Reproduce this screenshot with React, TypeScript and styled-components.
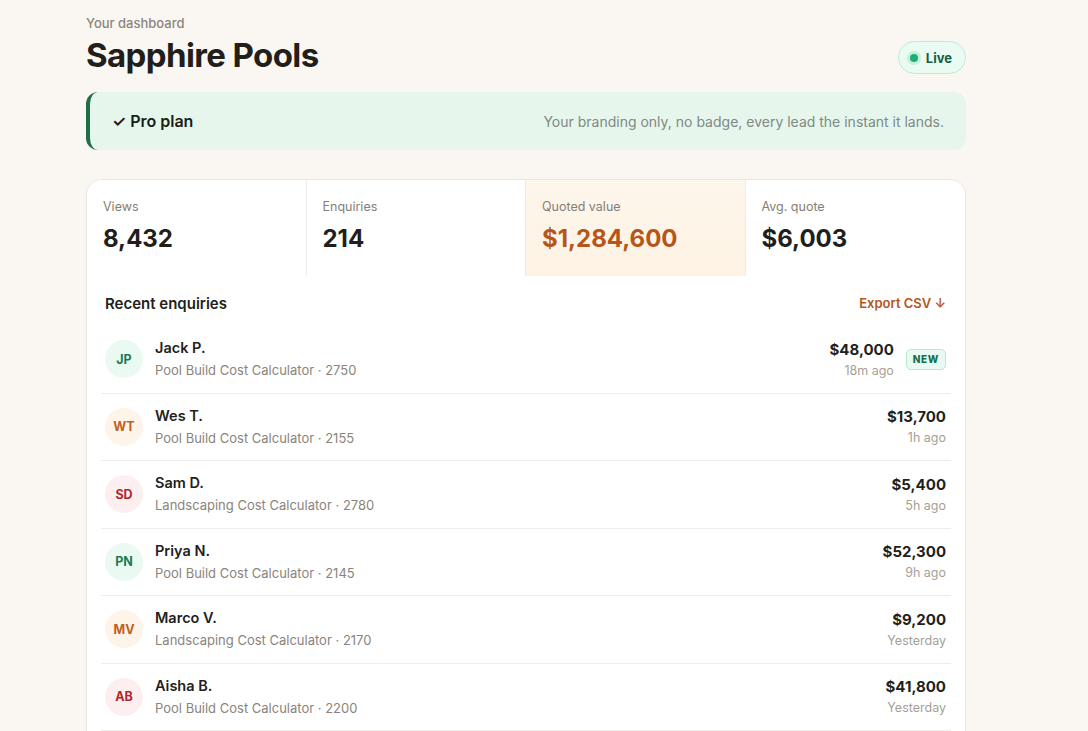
import styled, { createGlobalStyle } from 'styled-components'

const GlobalStyle = createGlobalStyle`
  html, body {
    margin: 0;
    padding: 0;
    background: #faf7f3;
    font-family: Inter, 'Noto Sans', 'Liberation Sans', sans-serif;
    color: #221f1c;
    -webkit-font-smoothing: antialiased;
  }
`

interface Enquiry {
  initials: string
  name: string
  source: string
  postcode: string
  amount: string
  when: string
  tone: 'green' | 'orange' | 'red'
  isNew?: boolean
}

const enquiries: Enquiry[] = [
  { initials: 'JP', name: 'Jack P.', source: 'Pool Build Cost Calculator', postcode: '2750', amount: '$48,000', when: '18m ago', tone: 'green', isNew: true },
  { initials: 'WT', name: 'Wes T.', source: 'Pool Build Cost Calculator', postcode: '2155', amount: '$13,700', when: '1h ago', tone: 'orange' },
  { initials: 'SD', name: 'Sam D.', source: 'Landscaping Cost Calculator', postcode: '2780', amount: '$5,400', when: '5h ago', tone: 'red' },
  { initials: 'PN', name: 'Priya N.', source: 'Pool Build Cost Calculator', postcode: '2145', amount: '$52,300', when: '9h ago', tone: 'green' },
  { initials: 'MV', name: 'Marco V.', source: 'Landscaping Cost Calculator', postcode: '2170', amount: '$9,200', when: 'Yesterday', tone: 'orange' },
  { initials: 'AB', name: 'Aisha B.', source: 'Pool Build Cost Calculator', postcode: '2200', amount: '$41,800', when: 'Yesterday', tone: 'red' },
]

const stats = [
  { label: 'Views', value: '8,432' },
  { label: 'Enquiries', value: '214' },
  { label: 'Quoted value', value: '$1,284,600', highlight: true },
  { label: 'Avg. quote', value: '$6,003' },
]

const tones = {
  green: { bg: '#eafaf3', fg: '#1b7a52' },
  orange: { bg: '#fef4ea', fg: '#c0601f' },
  red: { bg: '#fdeff0', fg: '#b3262d' },
}

const App = () => {
  return (
    <Page>
      <GlobalStyle />
      <Header>
        <div>
          <Eyebrow>Your dashboard</Eyebrow>
          <Title>Sapphire Pools</Title>
        </div>
        <LiveBadge>
          <Dot />
          Live
        </LiveBadge>
      </Header>

      <PlanBanner>
        <PlanName>✓ Pro plan</PlanName>
        <PlanNote>Your branding only, no badge, every lead the instant it lands.</PlanNote>
      </PlanBanner>

      <Card>
        <Stats>
          {stats.map((s) => (
            <Stat key={s.label} $highlight={s.highlight}>
              <StatLabel>{s.label}</StatLabel>
              <StatValue $highlight={s.highlight}>{s.value}</StatValue>
            </Stat>
          ))}
        </Stats>

        <ListSection>
          <ListHeader>
            <ListTitle>Recent enquiries</ListTitle>
            <ExportLink>Export CSV ↓</ExportLink>
          </ListHeader>
          {enquiries.map((e) => (
            <Row key={e.initials + e.name}>
              <Avatar $tone={e.tone}>{e.initials}</Avatar>
              <Who>
                <Name>{e.name}</Name>
                <Source>
                  {e.source} · {e.postcode}
                </Source>
              </Who>
              <Quote>
                <Amount>{e.amount}</Amount>
                <When>{e.when}</When>
              </Quote>
              {e.isNew && <NewTag>NEW</NewTag>}
            </Row>
          ))}
        </ListSection>
      </Card>
    </Page>
  )
}

export default App

const Page = styled.main`
  width: 966px;
  padding: 15px 0 40px 86px;
  min-height: 100vh;
  box-sizing: border-box;
`

const Header = styled.header`
  display: flex;
  justify-content: space-between;
  align-items: flex-end;
  margin-bottom: 17px;
`

const Eyebrow = styled.div`
  font-size: 13px;
  font-weight: 500;
  color: #8c857d;
  line-height: 16px;
`

const Title = styled.h1`
  margin: 4px 0 0;
  font-size: 33px;
  font-weight: 700;
  letter-spacing: -0.6px;
  line-height: 40px;
  color: #221e1a;
`

const LiveBadge = styled.div`
  display: flex;
  align-items: center;
  gap: 8px;
  height: 31px;
  padding: 0 13px 0 11px;
  margin-bottom: 1px;
  border-radius: 999px;
  background: #eafbf3;
  border: 1px solid #bdecd6;
  color: #16603f;
  font-size: 13px;
  font-weight: 700;
`

const Dot = styled.span`
  width: 8px;
  height: 8px;
  border-radius: 50%;
  background: #1fae78;
  box-shadow: 0 0 0 3px #c4f0dc;
`

const PlanBanner = styled.section`
  display: flex;
  justify-content: space-between;
  align-items: center;
  height: 58px;
  padding: 0 22px;
  border-left: 4px solid #1e6f47;
  border-radius: 12px;
  background: #e6f6ec;
  margin-bottom: 29px;
`

const PlanName = styled.div`
  font-size: 16px;
  font-weight: 600;
  color: #16201b;
`

const PlanNote = styled.div`
  font-size: 14px;
  color: #7f8a84;
`

const Card = styled.section`
  background: #fff;
  border: 1px solid #ece7e0;
  border-radius: 16px;
  overflow: hidden;
  box-shadow: 0 1px 3px rgba(60, 40, 20, 0.04);
`

const Stats = styled.div`
  display: grid;
  grid-template-columns: repeat(4, 1fr);
`

const Stat = styled.div<{ $highlight?: boolean }>`
  height: 96px;
  padding: 19px 16px 0;
  box-sizing: border-box;
  border-right: 1px solid #efebe6;
  background: ${(p) => (p.$highlight ? 'linear-gradient(180deg, #fdf6ec 0%, #fef3e3 100%)' : '#fff')};

  &:last-child {
    border-right: none;
  }
`

const StatLabel = styled.div`
  font-size: 12.5px;
  color: #857e76;
  line-height: 16px;
`

const StatValue = styled.div<{ $highlight?: boolean }>`
  margin-top: 9px;
  font-size: 24px;
  font-weight: 700;
  line-height: 30px;
  color: ${(p) => (p.$highlight ? '#b6561a' : '#211e1b')};
`

const ListSection = styled.div`
  padding: 17px 14px 16px;
`

const ListHeader = styled.div`
  display: flex;
  justify-content: space-between;
  align-items: center;
  padding: 0 5px 0 4px;
  height: 20px;
  margin-bottom: 13px;
`

const ListTitle = styled.h2`
  margin: 0;
  font-size: 15px;
  font-weight: 600;
  color: #221f1c;
`

const ExportLink = styled.a`
  font-size: 13px;
  font-weight: 600;
  color: #b5561d;
  cursor: pointer;
`

const Row = styled.div`
  display: flex;
  align-items: center;
  gap: 12px;
  height: 67.5px;
  padding: 0 5px 0 4px;
  border-bottom: 1px solid #f0ece7;
  box-sizing: border-box;
`

const Avatar = styled.div<{ $tone: keyof typeof tones }>`
  flex: none;
  width: 38px;
  height: 38px;
  border-radius: 50%;
  display: flex;
  align-items: center;
  justify-content: center;
  background: ${(p) => tones[p.$tone].bg};
  color: ${(p) => tones[p.$tone].fg};
  font-size: 12.5px;
  font-weight: 700;
`

const Who = styled.div`
  flex: 1;
  display: flex;
  flex-direction: column;
  gap: 5px;
`

const Name = styled.div`
  font-size: 14.5px;
  font-weight: 600;
  color: #221f1c;
  line-height: 18px;
`

const Source = styled.div`
  font-size: 13px;
  color: #8a847d;
  line-height: 17px;
`

const Quote = styled.div`
  display: flex;
  flex-direction: column;
  align-items: flex-end;
  gap: 4px;
`

const Amount = styled.div`
  font-size: 15px;
  font-weight: 700;
  color: #221f1c;
  line-height: 19px;
`

const When = styled.div`
  font-size: 12.5px;
  color: #a59f98;
  line-height: 16px;
`

const NewTag = styled.span`
  padding: 0 6px;
  height: 19px;
  line-height: 19px;
  border-radius: 5px;
  background: #e8faf2;
  border: 1px solid #b7e9d3;
  color: #17704a;
  font-size: 10px;
  font-weight: 800;
  letter-spacing: 0.6px;
`
